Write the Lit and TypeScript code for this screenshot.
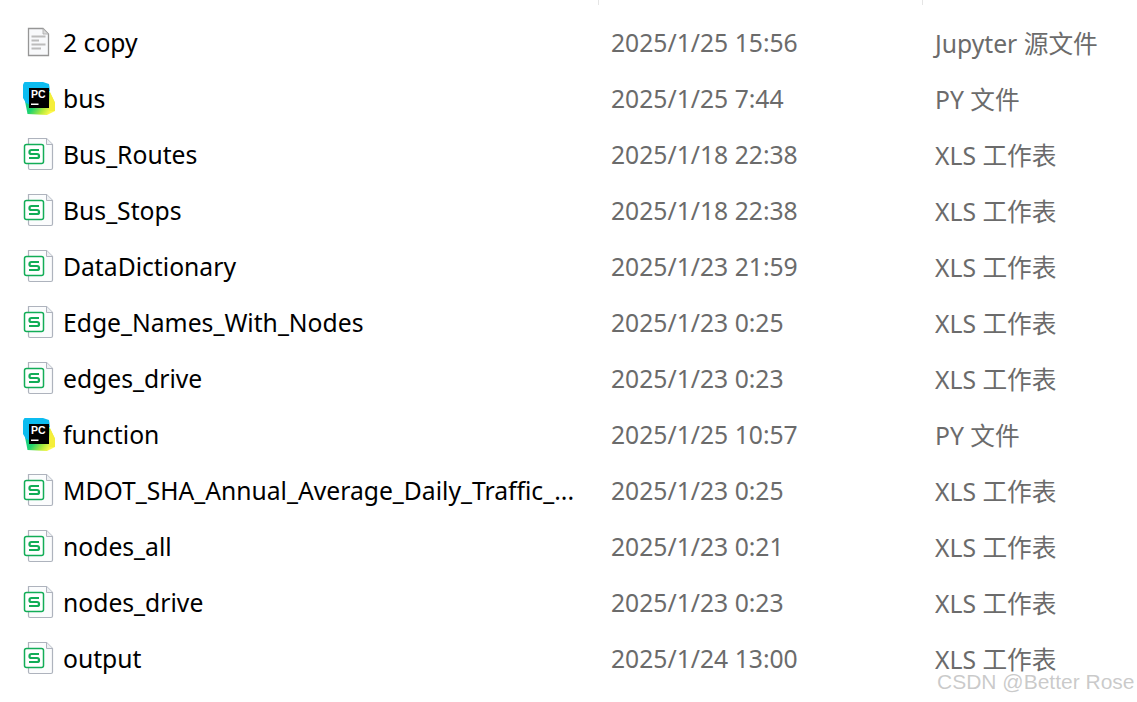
import { LitElement, html, css, svg } from "lit";
import { customElement } from "lit/decorators.js";

type Kind = "doc" | "pc" | "xls";
const rows: [Kind, string, string, string][] = [
  ["doc", "2 copy", "2025/1/25 15:56", "Jupyter 源文件"],
  ["pc", "bus", "2025/1/25 7:44", "PY 文件"],
  ["xls", "Bus_Routes", "2025/1/18 22:38", "XLS 工作表"],
  ["xls", "Bus_Stops", "2025/1/18 22:38", "XLS 工作表"],
  ["xls", "DataDictionary", "2025/1/23 21:59", "XLS 工作表"],
  ["xls", "Edge_Names_With_Nodes", "2025/1/23 0:25", "XLS 工作表"],
  ["xls", "edges_drive", "2025/1/23 0:23", "XLS 工作表"],
  ["pc", "function", "2025/1/25 10:57", "PY 文件"],
  ["xls", "MDOT_SHA_Annual_Average_Daily_Traffic_...", "2025/1/23 0:25", "XLS 工作表"],
  ["xls", "nodes_all", "2025/1/23 0:21", "XLS 工作表"],
  ["xls", "nodes_drive", "2025/1/23 0:23", "XLS 工作表"],
  ["xls", "output", "2025/1/24 13:00", "XLS 工作表"],
];

const icons: Record<Kind, unknown> = {
  doc: svg`<svg width="32" height="32" viewBox="0 0 32 32">
    <path d="M5.500 1.500H20L25.500 7V28.500H5.500Z" fill="#f8f9fb" stroke="#969696" stroke-width="1.300"/>
    <path d="M20 1.500V7H25.500Z" fill="#dcdcdc" stroke="#a8a8a8" stroke-width=".8"/>
    <path d="M8.500 9.500H22.500M8.500 13.500H16M8.500 17.500H22.500M8.500 21.500H18" stroke="#bcbcbc" stroke-width="1.800" fill="none"/>
  </svg>`,
  pc: svg`<svg class="over" width="32" height="32" viewBox="0 0 32 32">
    <defs>
      <linearGradient id="pcg" x1="0" y1="0" x2="1" y2="0.6">
        <stop offset="0" stop-color="#12c8a0"/><stop offset=".5" stop-color="#1fd36f"/><stop offset=".8" stop-color="#b4ea3c"/><stop offset="1" stop-color="#fcf84a"/>
      </linearGradient>
    </defs>
    <path d="M2 18L4.500 31L24 32L32 28L32 20L26 8Z" fill="url(#pcg)"/>
    <path d="M26 28L32 28V19.500L27 9Z" fill="#f5ee3a"/>
    <path d="M0 1.500L1.500 -1H20L26 1L27 8L8 22L3 20L0 15Z" fill="#0cbcf0"/>
    <rect x="6" y="5" width="20" height="20" fill="#000"/>
    <text x="8" y="15" class="pc">PC</text>
    <rect x="8" y="20.500" width="7.500" height="1.500" fill="#fff"/>
  </svg>`,
  xls: svg`<svg class="over" width="32" height="32" viewBox="0 0 32 32">
    <path d="M5.500 -.5H23.500L29.500 5.500V29Q29.500 30.500 28 30.500H7Q5.500 30.500 5.500 29Z" fill="#fbfcfd" stroke="#aeb3bd" stroke-width="1.200"/>
    <path d="M23.500 -.5V5.500H29.500" fill="#eef0f3" stroke="#aeb3bd" stroke-width="1"/>
    <rect x="1.500" y="5.500" width="19" height="19" rx="2" fill="#fff" stroke="#12ad57" stroke-width="1.500"/>
    <path d="M16 11H8.500Q6.500 11 6.500 13V13.500Q6.500 15 8.500 15H14Q16 15 16 17V17.500Q16 19 14 19H6" fill="none" stroke="#12ad57" stroke-width="2.200"/>
  </svg>`,
};

@customElement("app-root")
export class AppRoot extends LitElement {
  static styles = css`
    :host {
      display: block;
      position: relative;
      width: 1137px;
      height: 702px;
      overflow: hidden;
      background: #fff;
      font-family: "Noto Sans", "Noto Sans CJK SC", sans-serif;
      font-size: 24.7px;
    }
    .head {
      display: grid;
      grid-template-columns: 598px 324px 1fr;
      height: 5px;
      margin-bottom: 10px;
    }
    .head i { border-left: 1px solid #e5e5e5; }
    .head i:first-child { border-left: 0; }
    .row {
      display: grid;
      grid-template-columns: 63px 512px 36px 324px 1fr;
      align-items: center;
      height: 56px;
    }
    .icon { display: flex; padding-left: 23px; }
    .icon svg { display: block; overflow: visible; }
    .pc {
      font-family: "Liberation Sans", sans-serif;
      font-size: 10.500px;
      font-weight: 700;
      fill: #fff;
    }
    .name, .date, .type {
      white-space: nowrap;
      padding-bottom: 2px;
    }
    .name { color: #000; overflow: hidden; }
    .date { color: #6b6b6b; grid-column: 4; }
    .type { color: #6b6b6b; }
    .mark {
      position: absolute;
      left: 937px;
      top: 670px;
      font-family: "Liberation Sans", sans-serif;
      font-size: 21px;
      color: rgba(150, 150, 150, 0.5);
      white-space: nowrap;
    }
  `;

  render() {
    return html`
      <div class="head"><i></i><i></i><i></i></div>
      ${rows.map(
        ([k, n, d, t]) => html`<div class="row">
          <div class="icon">${icons[k]}</div>
          <div class="name">${n}</div>
          <div class="date">${d}</div>
          <div class="type">${t}</div>
        </div>`
      )}
      <div class="mark">CSDN @Better Rose</div>
    `;
  }
}
